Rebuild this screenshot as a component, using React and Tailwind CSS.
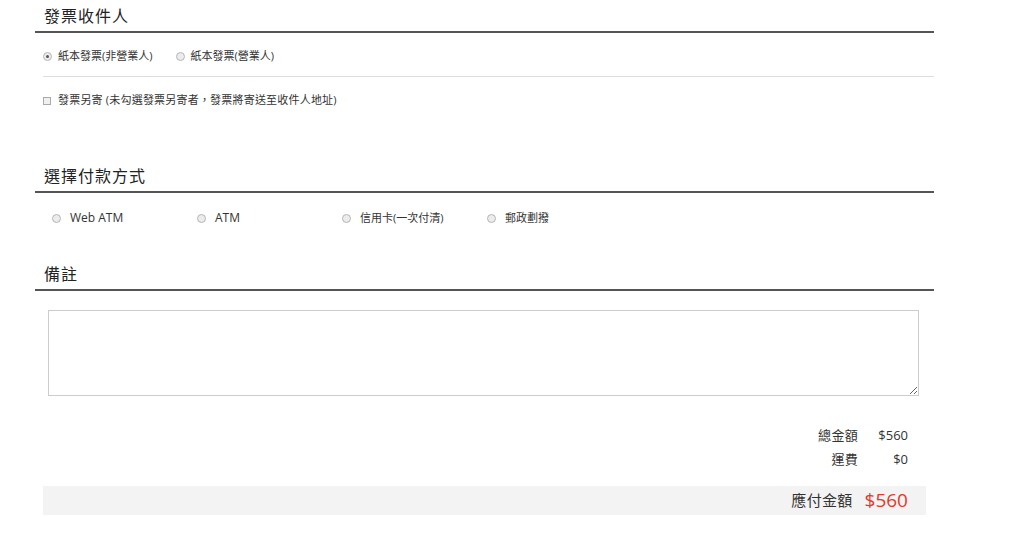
import React from 'react';

const FONT = "font-['Open_Sans','Noto_Sans_CJK_TC',sans-serif]";

const Radio = ({ checked }) => (
    <span className="inline-flex items-center justify-center w-[9px] h-[9px] rounded-full border border-[#b5b5b5] bg-[#ececec] shrink-0">
        {checked && <span className="w-[3px] h-[3px] rounded-full bg-[#555]" />}
    </span>
);

const SectionHeading = ({ children }) => (
    <div className="pt-[1px] pl-[9px] leading-[30px] text-[16px] tracking-[1px] text-[#222] border-b-2 border-[#555]">
        {children}
    </div>
);

const payments = [
    { label: 'Web ATM', size: 'text-[12px]' },
    { label: 'ATM', size: 'text-[12px]' },
    { label: '信用卡(一次付清)', size: 'text-[11px]' },
    { label: '郵政劃撥', size: 'text-[11px]' },
];

export default function App() {
    return (
        <div className={`${FONT} bg-white w-[1024px] h-[548px] overflow-hidden`}>
            <div className="ml-[35px] w-[899px]">
                {/* 發票收件人 */}
                <SectionHeading>發票收件人</SectionHeading>
                <div className="ml-[8px]">
                    <div className="h-[43px] pt-[3px] flex items-center text-[11px] text-[#333]">
                        <label className="flex items-center gap-[6px] mr-[23px]">
                            <Radio checked />
                            <span>紙本發票(非營業人)</span>
                        </label>
                        <label className="flex items-center gap-[6px]">
                            <Radio />
                            <span>紙本發票(營業人)</span>
                        </label>
                    </div>
                    <div className="border-t border-[#ddd]" />
                    <div className="h-[46px] pt-[1px] flex items-center text-[11px] text-[#333]">
                        <label className="flex items-center gap-[7px]">
                            <span className="w-[8px] h-[8px] border border-[#aaa] bg-[#f0f0f0]" />
                            <span className="tracking-[0.2px]">發票另寄 (未勾選發票另寄者，發票將寄送至收件人地址)</span>
                        </label>
                    </div>
                </div>

                {/* 選擇付款方式 */}
                <div className="mt-[37px]">
                    <SectionHeading>選擇付款方式</SectionHeading>
                    <div className="h-[50px] flex items-center pl-[17px] text-[#333]">
                        {payments.map((p) => (
                            <label key={p.label} className={`w-[145px] flex items-center gap-[9px] ${p.size}`}>
                                <Radio />
                                <span>{p.label}</span>
                            </label>
                        ))}
                    </div>
                </div>

                {/* 備註 */}
                <div className="mt-[15px]">
                    <SectionHeading>備註</SectionHeading>
                    <div className="pt-[19px] pl-[13px]">
                        <textarea className="block w-[871px] h-[86px] border border-[#ccc] resize-y outline-none" />
                    </div>
                </div>

                {/* 金額 */}
                <div className="mt-[28px] pr-[26px] flex flex-col items-end text-[13px] text-[#333]">
                    <div className="flex h-[24px] items-center">
                        <span className="tracking-[0.3px]">總金額</span>
                        <span className="w-[50px] text-right">$560</span>
                    </div>
                    <div className="flex h-[24px] items-center">
                        <span className="tracking-[0.3px]">運費</span>
                        <span className="w-[50px] text-right">$0</span>
                    </div>
                </div>
                <div className="mt-[14px] ml-[8px] w-[883px] h-[29px] bg-[#f3f3f3] flex items-center justify-end pr-[18px]">
                    <span className="text-[15px] text-[#333] tracking-[0.3px]">應付金額</span>
                    <span className="ml-[12px] text-[19px] text-[#e0392e] font-medium">$560</span>
                </div>
            </div>
        </div>
    );
}
